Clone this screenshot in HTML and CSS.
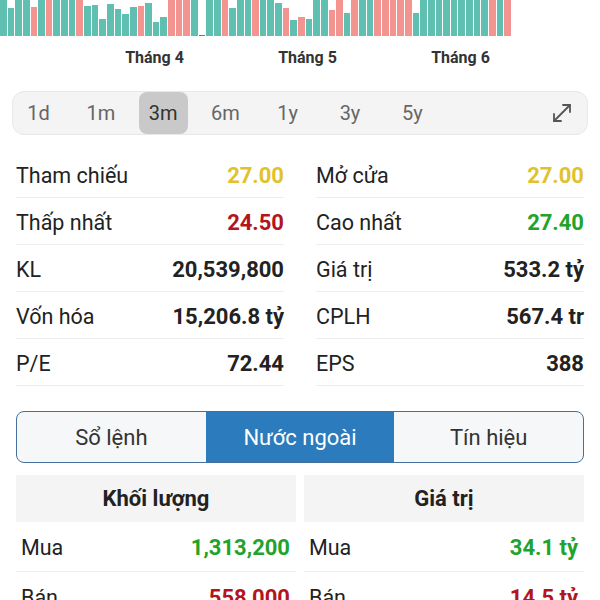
FILE: index.html
```html
<!DOCTYPE html>
<html lang="vi">
<head>
<meta charset="utf-8">
<title>Stock</title>
<link rel="stylesheet" href="styles.css">
</head>
<body>
<div class="chart">
  <div class="bars">
    <i class="b t" style="height:100%"></i><i class="b t" style="height:28px"></i><i class="b t" style="height:100%"></i><i class="b t" style="height:100%"></i><i class="b r" style="height:29px"></i><i class="b t" style="height:100%"></i><i class="b r" style="height:100%"></i><i class="b t" style="height:100%"></i><i class="b t" style="height:100%"></i><i class="b t" style="height:100%"></i>
    <i class="b r" style="height:100%"></i><i class="b t" style="height:30px"></i><i class="b t" style="height:31px"></i><i class="b t" style="height:17px"></i><i class="b t" style="height:32px"></i><i class="b t" style="height:27px"></i><i class="b t" style="height:22px"></i><i class="b t" style="height:29px"></i><i class="b r" style="height:30px"></i><i class="b t" style="height:33px"></i>
    <i class="b t" style="height:14px"></i><i class="b t" style="height:19px"></i><i class="b r" style="height:100%"></i><i class="b r" style="height:100%"></i><i class="b r" style="height:100%"></i><i class="b t" style="height:100%"></i><i class="b z" style="height:1px"></i><i class="b t" style="height:100%"></i><i class="b t" style="height:100%"></i><i class="b r" style="height:100%"></i>
    <i class="b t" style="height:28px"></i><i class="b t" style="height:100%"></i><i class="b t" style="height:100%"></i><i class="b r" style="height:100%"></i><i class="b t" style="height:100%"></i><i class="b t" style="height:100%"></i><i class="b t" style="height:33px"></i><i class="b r" style="height:28px"></i><i class="b t" style="height:16px"></i><i class="b r" style="height:19px"></i>
    <i class="b t" style="height:17px"></i><i class="b t" style="height:100%"></i><i class="b t" style="height:100%"></i><i class="b r" style="height:26px"></i><i class="b r" style="height:100%"></i><i class="b t" style="height:23px"></i><i class="b r" style="height:100%"></i><i class="b t" style="height:100%"></i><i class="b t" style="height:100%"></i><i class="b r" style="height:100%"></i>
    <i class="b r" style="height:100%"></i><i class="b r" style="height:100%"></i><i class="b r" style="height:100%"></i><i class="b r" style="height:100%"></i><i class="b t" style="height:23px"></i><i class="b t" style="height:100%"></i><i class="b t" style="height:100%"></i><i class="b t" style="height:100%"></i><i class="b t" style="height:100%"></i><i class="b t" style="height:100%"></i>
    <i class="b t" style="height:100%"></i><i class="b t" style="height:100%"></i><i class="b t" style="height:100%"></i><i class="b t" style="height:100%"></i><i class="b r" style="height:100%"></i><i class="b t" style="height:100%"></i><i class="b r" style="height:100%"></i>
  </div>
</div>
<div class="months">
  <span class="month">Tháng 4</span>
  <span class="month">Tháng 5</span>
  <span class="month">Tháng 6</span>
</div>

<div class="periods">
  <span class="period">1d</span>
  <span class="period">1m</span>
  <span class="period active">3m</span>
  <span class="period">6m</span>
  <span class="period">1y</span>
  <span class="period">3y</span>
  <span class="period">5y</span>
  <svg class="expand" viewBox="0 0 24 24" width="24" height="24" fill="none" stroke="#555" stroke-width="1.8" stroke-linecap="round" stroke-linejoin="round">
    <path d="M4 20 L20 4"/>
    <path d="M13 4 H20 V11"/>
    <path d="M4 13 V20 H11"/>
  </svg>
</div>

<div class="stats">
  <div class="col">
    <div class="row"><span class="lbl">Tham chiếu</span><span class="val yellow">27.00</span></div>
    <div class="row"><span class="lbl">Thấp nhất</span><span class="val red">24.50</span></div>
    <div class="row"><span class="lbl">KL</span><span class="val">20,539,800</span></div>
    <div class="row"><span class="lbl">Vốn hóa</span><span class="val">15,206.8 tỷ</span></div>
    <div class="row"><span class="lbl">P/E</span><span class="val">72.44</span></div>
  </div>
  <div class="col">
    <div class="row"><span class="lbl">Mở cửa</span><span class="val yellow">27.00</span></div>
    <div class="row"><span class="lbl">Cao nhất</span><span class="val green">27.40</span></div>
    <div class="row"><span class="lbl">Giá trị</span><span class="val">533.2 tỷ</span></div>
    <div class="row"><span class="lbl">CPLH</span><span class="val">567.4 tr</span></div>
    <div class="row"><span class="lbl">EPS</span><span class="val">388</span></div>
  </div>
</div>

<div class="tabs">
  <span class="tab">Sổ lệnh</span>
  <span class="tab active">Nước ngoài</span>
  <span class="tab">Tín hiệu</span>
</div>

<div class="panels">
  <div class="panel">
    <div class="phead">Khối lượng</div>
    <div class="prow"><span class="lbl">Mua</span><span class="val green">1,313,200</span></div>
    <div class="prow"><span class="lbl">Bán</span><span class="val red">558,000</span></div>
  </div>
  <div class="panel">
    <div class="phead">Giá trị</div>
    <div class="prow"><span class="lbl">Mua</span><span class="val green">34.1 tỷ</span></div>
    <div class="prow"><span class="lbl">Bán</span><span class="val red">14.5 tỷ</span></div>
  </div>
</div>
</body>
</html>
```

FILE: styles.css
```css
* { box-sizing: border-box; }
html, body {
  margin: 0;
  padding: 0;
  background: #fff;
  font-family: Roboto, "Noto Sans", "Liberation Sans", sans-serif;
  color: #222;
  overflow: hidden;
}
.chart {
  height: 36px;
  width: 511px;
  overflow: hidden;
}
.bars {
  display: flex;
  align-items: flex-end;
  gap: 1px;
  height: 36px;
}
.b {
  display: block;
  flex: 1 1 0;
}
.b.t { background: #5fbfb1; }
.b.r { background: #f39491; }
.b.z { background: #777; }

.months {
  display: flex;
  padding-left: 78px;
  margin-top: 12px;
  height: 20px;
}
.month {
  width: 153px;
  text-align: center;
  font-size: 16px;
  font-weight: 700;
  line-height: 20px;
  color: #333;
}

.periods {
  display: flex;
  align-items: stretch;
  gap: 13.3px;
  margin: 23px 12px 0;
  height: 44px;
  padding: 0 1px;
  background: #f4f4f4;
  border: 1px solid #e8e8e8;
  border-radius: 12px;
}
.period {
  width: 49px;
  display: flex;
  align-items: center;
  justify-content: center;
  font-size: 20px;
  color: #666;
  border-radius: 8px;
}
.period.active {
  background: #c9c9c9;
  color: #333;
}
.expand {
  margin-left: auto;
  margin-right: 12px;
  align-self: center;
}

.stats {
  display: grid;
  grid-template-columns: 1fr 1fr;
  column-gap: 32px;
  padding: 0 16px;
  margin-top: 16px;
}
.row {
  display: flex;
  justify-content: space-between;
  align-items: center;
  height: 47px;
  padding-top: 2px;
  border-bottom: 1px solid #ededed;
}
.lbl {
  font-size: 21.5px;
  color: #222;
}
.val {
  font-size: 22px;
  font-weight: 700;
  color: #222;
}
.yellow { color: #e2c22c; }
.red { color: #b4141c; }
.green { color: #22a32a; }

.tabs {
  display: flex;
  margin: 25px 16px 0;
  height: 52px;
  border: 1px solid #44709b;
  border-radius: 8px;
  overflow: hidden;
  background: #f6f7f8;
}
.tab {
  flex: 1 1 0;
  display: flex;
  align-items: center;
  justify-content: center;
  font-size: 22px;
  color: #333;
}
.tab.active {
  background: #2b7bbd;
  color: #fff;
}

.panels {
  display: grid;
  grid-template-columns: 1fr 1fr;
  column-gap: 8px;
  padding: 0 16px;
  margin-top: 12px;
}
.phead {
  height: 47px;
  display: flex;
  align-items: center;
  justify-content: center;
  background: #f4f4f4;
  font-size: 22px;
  font-weight: 700;
  color: #222;
}
.prow {
  display: flex;
  justify-content: space-between;
  align-items: center;
  height: 50px;
  padding: 2px 6px 0 5px;
  border-bottom: 1px solid #ededed;
}
```
